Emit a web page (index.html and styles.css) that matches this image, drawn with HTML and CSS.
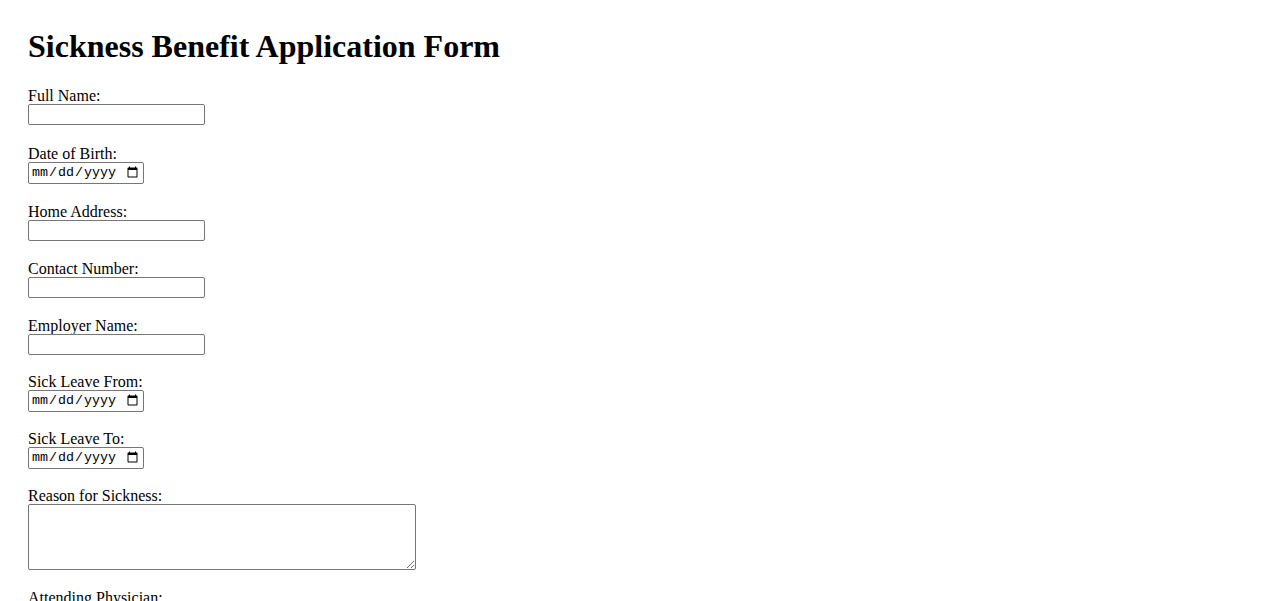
FILE: index.html
```html
<!DOCTYPE html>
<html lang="en">
<head>
<meta charset="utf-8">
<title>Sickness Benefit Application Form</title>
<link rel="stylesheet" href="styles.css">
</head>
<body>
<main class="page">
  <h1 class="title">Sickness Benefit Application Form</h1>
  <form class="form">
    <div class="field field-loose">
      <label class="label" for="name">Full Name:</label>
      <input class="text" type="text" id="name">
    </div>
    <div class="field">
      <label class="label" for="dob">Date of Birth:</label>
      <input class="date" type="date" id="dob">
    </div>
    <div class="field">
      <label class="label" for="addr">Home Address:</label>
      <input class="text" type="text" id="addr">
    </div>
    <div class="field">
      <label class="label" for="phone">Contact Number:</label>
      <input class="text" type="text" id="phone">
    </div>
    <div class="field field-tight">
      <label class="label" for="emp">Employer Name:</label>
      <input class="text" type="text" id="emp">
    </div>
    <div class="field field-tight">
      <label class="label" for="from">Sick Leave From:</label>
      <input class="date" type="date" id="from">
    </div>
    <div class="field field-tight">
      <label class="label" for="to">Sick Leave To:</label>
      <input class="date" type="date" id="to">
    </div>
    <div class="field">
      <label class="label" for="reason">Reason for Sickness:</label>
      <textarea class="area" id="reason"></textarea>
    </div>
    <div class="field">
      <label class="label" for="doc">Attending Physician:</label>
      <input class="text" type="text" id="doc">
    </div>
  </form>
</main>
</body>
</html>
```
FILE: styles.css
```css
html, body {
  margin: 0;
  padding: 0;
  background: #ffffff;
}
body {
  font-family: "Liberation Serif", "Times New Roman", serif;
  font-size: 16px;
  color: #000000;
}
.page {
  padding: 28px 28px 0 28px;
}
.title {
  font-size: 32px;
  font-weight: bold;
  line-height: 37px;
  margin: 0 0 21px 0;
}
.form {
  display: flex;
  flex-direction: column;
}
.field {
  display: flex;
  flex-direction: column;
  align-items: flex-start;
  margin-bottom: 18px;
}
.field-loose {
  margin-bottom: 19px;
}
.field-tight {
  margin-bottom: 17px;
}
.label {
  line-height: 20px;
  height: 18px;
}
.text, .date, .area {
  box-sizing: border-box;
  margin: 0;
  border: 1px solid #767676;
  border-radius: 2px;
  background: #ffffff;
  font-size: 13.333px;
}
.text {
  width: 177px;
  height: 21px;
  padding: 1px 2px;
  font-family: "Liberation Sans", Arial, sans-serif;
}
.date {
  width: 116px;
  height: 22px;
  padding: 1px 2px;
  font-family: "Liberation Mono", "Courier New", monospace;
  color: #000000;
}
.area {
  width: 388px;
  height: 66px;
  padding: 2px;
  font-family: "Liberation Mono", "Courier New", monospace;
  resize: both;
}
```
